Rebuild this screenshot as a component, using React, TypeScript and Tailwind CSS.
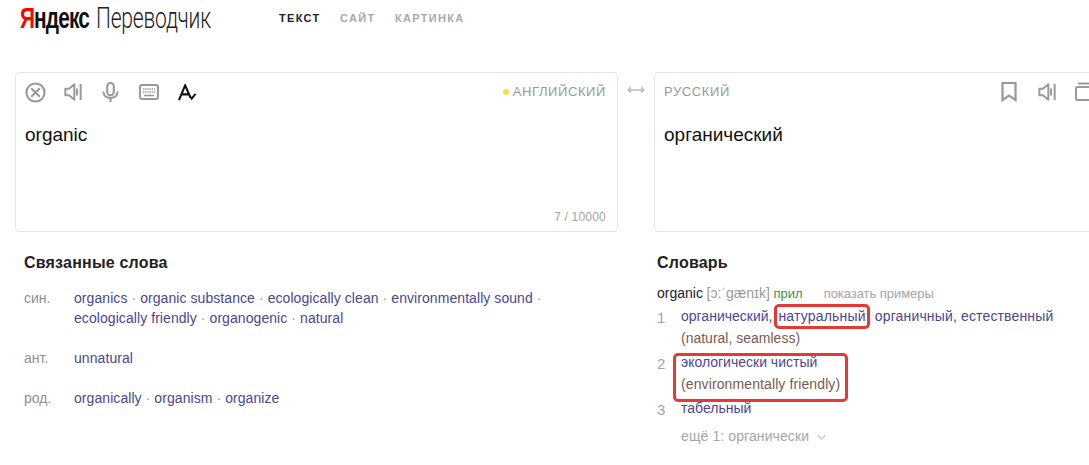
const tabs = [
  { label: "ТЕКСТ", color: "text-[#222222]" },
  { label: "САЙТ", color: "text-[#a9a9a9]" },
  { label: "КАРТИНКА", color: "text-[#a9a9a9]" },
];

const related = [
  {
    label: "син.",
    lines: [
      ["organics", "organic substance", "ecologically clean", "environmentally sound", ""],
      ["ecologically friendly", "organogenic", "natural"],
    ],
  },
  { label: "ант.", lines: [["unnatural"]] },
  { label: "род.", lines: [["organically", "organism", "organize"]] },
];

function SpeakerIcon({ className }: { className?: string }) {
  return (
    <svg viewBox="0 0 20 22" className={className} fill="none" stroke="currentColor" strokeWidth="2.2">
      <path d="M1.500 7.500h4l6-5v17l-6-5h-4z" strokeLinejoin="round" />
      <path d="M14.500 7v8M18.500 2v18" />
    </svg>
  );
}

function RelatedRow({ label, lines }: { label: string; lines: string[][] }) {
  return (
    <div className="mb-5 flex leading-5">
      <div className="w-[50px] shrink-0 text-[#8f8f8f]">{label}</div>
      <div className="tracking-[0.07px]">
        {lines.map((line, i) => (
          <div key={i} className="text-[#4b4690]">
            {line.map((word, j) => (
              <span key={j}>
                {j > 0 ? <span className="text-[#999999]"> · </span> : null}
                {word}
              </span>
            ))}
          </div>
        ))}
      </div>
    </div>
  );
}

export default function App() {
  return (
    <div className="relative h-[465px] w-[1089px] overflow-hidden bg-white font-['Liberation_Sans',Arial,sans-serif] text-[14px]">
      <header className="flex h-[72px] items-start">
        <div className="ml-[20px] mt-[1px] flex h-[34px] w-[240px] items-center whitespace-nowrap text-[30px] leading-[34px]">
          <span className="mr-[-23px] shrink-0 origin-left scale-x-[0.695] font-bold tracking-[-1.270px] text-[#111111]">
            <span className="text-[#ff0000]">Я</span>ндекс
          </span>
          <span className="shrink-0 origin-left scale-x-[0.7] font-['Roboto',sans-serif] font-light tracking-[-0.270px] text-[#222222]">
            Переводчик
          </span>
        </div>
        <nav className="ml-[19px] mt-[12px] flex gap-[19.500px] text-[11px] font-bold leading-[13px] tracking-[1.3px]">
          {tabs.map((tab) => (
            <span key={tab.label} className={tab.color}>
              {tab.label}
            </span>
          ))}
        </nav>
      </header>

      <div className="flex">
        <section className="ml-[15px] h-[160px] w-[603px] shrink-0 rounded-[4px] border border-[#e5e5e5] pl-[9px] pr-[11px]">
          <div className="flex h-[38px] items-center text-[#999999]">
            <svg viewBox="0 0 22 22" className="size-[21px]" fill="none" stroke="currentColor" strokeWidth="2.2">
              <circle cx="11" cy="11" r="9.500" />
              <path d="M6.500 6.500l9 9M15.500 6.500l-9 9" />
            </svg>
            <SpeakerIcon className="ml-[18px] h-[20px] w-[18px]" />
            <svg viewBox="0 0 18 22" className="ml-[20px] h-[21px] w-[17px]" fill="none" stroke="currentColor" strokeWidth="2.2">
              <rect x="5.500" y="1" width="7" height="13" rx="3.500" />
              <path d="M1.500 10c0 9 15 9 15 0M9 16v5" />
            </svg>
            <svg viewBox="0 0 20 16" className="ml-[20px] h-[16px] w-[20px]" fill="none">
              <rect x="1" y="1" width="18" height="14" rx="2" stroke="currentColor" strokeWidth="2" />
              <path d="M4 5h12M4 8h12" stroke="currentColor" strokeWidth="1.600" strokeDasharray="1.400 0.800" />
              <path d="M5 11.500h10" stroke="currentColor" strokeWidth="1.600" />
            </svg>
            <svg viewBox="0 0 20 18" className="ml-[19px] h-[17px] w-[19px]" fill="none" stroke="#111111" strokeWidth="2.200">
              <path d="M1 17L7.500 1.500 13 14M3.500 11h8" />
              <path d="M12.500 13l2 2.500 4-5" strokeWidth="2" />
            </svg>
            <div className="ml-auto flex items-center text-[13px] tracking-[0.6px] text-[#999999]">
              <span className="mr-[4px] size-[6px] rounded-full bg-[#ffdb4d]" />
              АНГЛИЙСКИЙ
            </div>
          </div>
          <div className="mt-[12px] text-[19px] leading-[24px] text-[#111111]">organic</div>
          <div className="mt-[63px] text-right text-[12px] leading-[14px] tracking-[0.2px] text-[#a5a5a5]">7 / 10000</div>
        </section>

        <div className="flex w-[36px] shrink-0 justify-center pt-[13px] text-[#bdbdbd]">
          <svg viewBox="0 0 18 10" className="h-[10px] w-[18px]" fill="currentColor">
            <path d="M0 5l4-3.500v2.700h10V1.500L18 5l-4 3.500V5.800H4v2.700z" />
          </svg>
        </div>

        <section className="h-[160px] w-[460px] shrink-0 rounded-[4px] border border-[#e5e5e5] pl-[9px]">
          <div className="flex h-[38px] items-center text-[#999999]">
            <span className="text-[13px] tracking-[0.6px]">РУССКИЙ</span>
            <svg viewBox="0 0 16 20" className="ml-[271px] h-[20px] w-[16px]" fill="none" stroke="currentColor" strokeWidth="2.2">
              <path d="M1.500 1h13v17L8 13.500 1.500 18z" />
            </svg>
            <SpeakerIcon className="ml-[21px] h-[20px] w-[18px]" />
            <svg viewBox="0 0 18 20" className="ml-[19px] h-[20px] w-[18px]" fill="none" stroke="currentColor" strokeWidth="2">
              <path d="M3 1.500h14" />
              <rect x="1" y="5" width="16" height="13" rx="1.500" />
            </svg>
          </div>
          <div className="mt-[12px] text-[19px] leading-[24px] text-[#111111]">органический</div>
        </section>
      </div>

      <div className="flex">
        <section className="ml-[24px] w-[630px] shrink-0 pt-[21px]">
          <h2 className="mb-[15px] text-[16px] font-bold leading-5 tracking-[0.2px] text-[#222222]">Связанные слова</h2>
          {related.map((row) => (
            <RelatedRow key={row.label} label={row.label} lines={row.lines} />
          ))}
        </section>

        <section className="ml-[3px] shrink-0 pt-[21px]">
          <h2 className="mb-[10px] text-[16px] font-bold leading-5 tracking-[0.2px] text-[#222222]">Словарь</h2>
          <div className="whitespace-nowrap text-[13px] leading-5">
            <span className="text-[14px] text-[#222222]">organic</span>{" "}
            <span className="text-[14px] text-[#999999]">[ɔ:ˈgænɪk]</span> <span className="text-[#3f8f3f]">прил</span>
            <span className="ml-[21px] tracking-[-0.05px] text-[#a5a5a5]">показать примеры</span>
          </div>

          <div className="mt-[1px] flex leading-[22px]">
            <div className="w-[24px] pt-[2px] text-[15px] text-[#a5a5a5]">1</div>
            <div className="whitespace-nowrap">
              <div className="text-[#4b4690]">
                органический,<span className="ml-[6px] tracking-[0.18px]">натуральный,</span>
                <span className="ml-[5px] tracking-[0.15px]">органичный, естественный</span>
              </div>
              <div className="text-[#7a5a50]">(natural, seamless)</div>
            </div>
          </div>
          <div className="mt-[2px] flex leading-[22px]">
            <div className="w-[24px] pt-[2px] text-[15px] text-[#a5a5a5]">2</div>
            <div className="whitespace-nowrap">
              <div className="text-[#4b4690]">экологически чистый</div>
              <div className="tracking-[0.11px] text-[#7a5a50]">(environmentally friendly)</div>
            </div>
          </div>
          <div className="mt-[2px] flex leading-[22px]">
            <div className="w-[24px] pt-[2px] text-[15px] text-[#a5a5a5]">3</div>
            <div className="text-[#4b4690]">табельный</div>
          </div>
          <div className="ml-[24px] mt-[5px] flex items-center leading-[20px] tracking-[0.1px] text-[#a5a5a5]">
            ещё 1: органически
            <svg viewBox="0 0 10 6" className="ml-[7px] mt-[2px] h-[6px] w-[11px]" fill="none" stroke="#cccccc" strokeWidth="1.500">
              <path d="M1 1l4 4 4-4" />
            </svg>
          </div>
        </section>
      </div>

      <div className="absolute left-[774px] top-[304px] h-[25px] w-[96px] rounded-[5px] border-[3px] border-[#e53935]" />
      <div className="absolute left-[673px] top-[353px] h-[49px] w-[175px] rounded-[5px] border-[3px] border-[#e53935]" />
    </div>
  );
}
